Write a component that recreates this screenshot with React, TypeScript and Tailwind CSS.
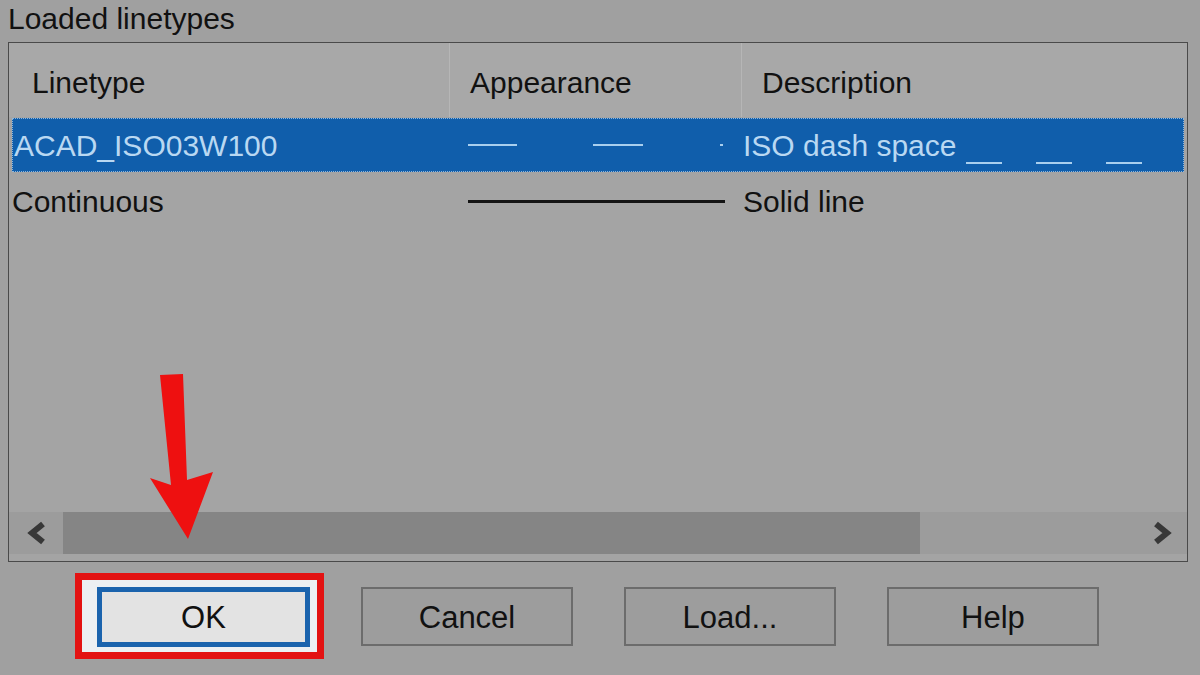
import React from "react";

function Chevron({ dir }: { dir: "left" | "right" }) {
  return (
    <svg width="22" height="24" viewBox="0 0 22 24">
      {dir === "left" ? (
        <polyline points="17,3 6,12 17,21" fill="none" stroke="#383838" strokeWidth="6" strokeLinejoin="miter" />
      ) : (
        <polyline points="5,3 16,12 5,21" fill="none" stroke="#383838" strokeWidth="6" strokeLinejoin="miter" />
      )}
    </svg>
  );
}

export default function App() {
  return (
    <div
      className="relative w-[1200px] h-[675px] overflow-hidden bg-[#a0a0a0] text-black"
      style={{ fontFamily: '"Liberation Sans", Arial, sans-serif' }}
    >
      {/* Title */}
      <div className="h-[42px] pl-[8px] text-[30px] leading-[38px] text-[#111]">Loaded linetypes</div>

      {/* List box */}
      <div className="ml-[8px] w-[1180px] h-[520px] border border-[#4a4a4a] bg-[#a4a4a4] flex flex-col">
        {/* Header */}
        <div className="h-[74px] flex bg-[#a8a8a8] text-[30px] text-[#111]">
          <div className="w-[440px] flex items-center pl-[23px] pt-[4px]">Linetype</div>
          <div className="w-[292px] flex items-center pl-[20px] pt-[4px] border-l border-[#b6b6b6]">Appearance</div>
          <div className="flex-1 flex items-center pl-[20px] pt-[4px] border-l border-[#b6b6b6]">Description</div>
        </div>

        {/* Selected row */}
        <div className="mt-[1px] ml-[3px] mr-[3px] h-[54px] flex bg-[#105eab] border border-dotted border-[#8fb5da] text-[30px] text-[#b9d8f2]">
          <div className="w-[455px] flex items-center pl-[1px]">ACAD_ISO03W100</div>
          <div className="w-[275px] flex items-center">
            <div className="w-[49px] h-[2px] bg-[#a9cfee]" />
            <div className="ml-[76px] w-[50px] h-[2px] bg-[#a9cfee]" />
            <div className="ml-[77px] w-[3px] h-[2px] bg-[#a9cfee]" />
          </div>
          <div className="flex-1 flex items-center">
            <span>ISO dash space</span>
            <div className="ml-[10px] mt-[36px] w-[36px] h-[2px] bg-[#a9cfee]" />
            <div className="ml-[34px] mt-[36px] w-[36px] h-[2px] bg-[#a9cfee]" />
            <div className="ml-[34px] mt-[36px] w-[36px] h-[2px] bg-[#a9cfee]" />
          </div>
        </div>

        {/* Continuous row */}
        <div className="ml-[3px] mr-[3px] h-[58px] flex text-[30px] text-[#111]">
          <div className="w-[456px] flex items-center">Continuous</div>
          <div className="w-[275px] flex items-center">
            <div className="w-[257px] h-[3px] bg-[#141414]" />
          </div>
          <div className="flex-1 flex items-center">Solid line</div>
        </div>

        <div className="flex-1" />

        {/* Horizontal scrollbar */}
        <div className="h-[42px] mb-[7px] flex bg-[#9c9c9c]">
          <div className="w-[54px] flex items-center justify-center pl-[2px]">
            <Chevron dir="left" />
          </div>
          <div className="w-[857px] bg-[#858585]" />
          <div className="flex-1 flex items-center justify-end pr-[14px]">
            <Chevron dir="right" />
          </div>
        </div>
      </div>

      {/* Buttons */}
      <div className="mt-[25px] pl-[97px] flex gap-[51px] text-[31px] text-[#111]">
        <div className="relative w-[213px] h-[60px]">
          <div className="absolute left-[-22px] top-[-14px] w-[249px] h-[86px] border-[7px] border-[#e31212] bg-[#eceff2]" />
          <div className="relative w-full h-full border-[5px] border-[#1a63ad] bg-[#e3e3e3] flex items-center justify-center pt-[3px]">
            OK
          </div>
        </div>
        <div className="w-[212px] h-[59px] border-2 border-[#6c6c6c] bg-[#9d9d9d] flex items-center justify-center pt-[4px]">Cancel</div>
        <div className="w-[212px] h-[59px] border-2 border-[#6c6c6c] bg-[#9d9d9d] flex items-center justify-center pt-[4px]">Load...</div>
        <div className="w-[212px] h-[59px] border-2 border-[#6c6c6c] bg-[#9d9d9d] flex items-center justify-center pt-[4px]">Help</div>
      </div>

      {/* Red arrow annotation */}
      <svg className="absolute left-0 top-0 pointer-events-none" width="1200" height="675">
        <polygon
          points="160,375 183,374 187,480 213,472 188,539 150,478 171,485"
          fill="#ee1010"
        />
      </svg>
    </div>
  );
}
